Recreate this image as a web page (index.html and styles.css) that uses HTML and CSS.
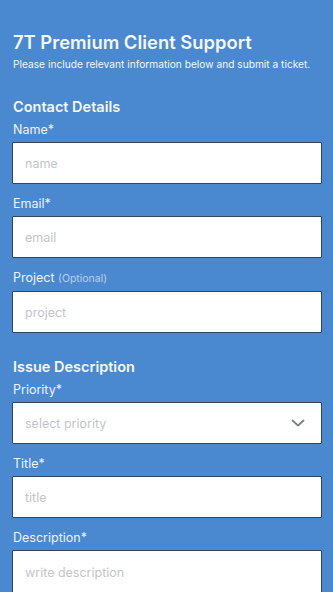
FILE: index.html
```html
<!DOCTYPE html>
<html lang="en">
<head>
    <meta charset="UTF-8">
    <meta name="viewport" content="width=device-width, initial-scale=1.0">
    <title>7T Premium Client Support</title>
    <link rel="stylesheet" href="styles.css">
</head>
<body>
    <div class="page">
        <h1 class="title">7T Premium Client Support</h1>
        <p class="subtitle">Please include relevant information below and submit a ticket.</p>

        <h2 class="section-title">Contact Details</h2>
        <div class="field">
            <label class="label" for="name">Name*</label>
            <input class="input" id="name" type="text" placeholder="name">
        </div>
        <div class="field">
            <label class="label" for="email">Email*</label>
            <input class="input" id="email" type="email" placeholder="email">
        </div>
        <div class="field">
            <label class="label" for="project">Project <span class="optional">(Optional)</span></label>
            <input class="input" id="project" type="text" placeholder="project">
        </div>

        <h2 class="section-title section-gap">Issue Description</h2>
        <div class="field">
            <label class="label" for="priority">Priority*</label>
            <div class="select">
                <span class="select-text">select priority</span>
                <svg class="chevron" width="14" height="8" viewBox="0 0 14 8">
                    <path d="M1.5 1.5 L7 6.5 L12.5 1.5" fill="none" stroke="#7a7f87" stroke-width="1.8" stroke-linecap="round" stroke-linejoin="round"/>
                </svg>
            </div>
        </div>
        <div class="field">
            <label class="label" for="title">Title*</label>
            <input class="input" id="title" type="text" placeholder="title">
        </div>
        <div class="field">
            <label class="label" for="description">Description*</label>
            <textarea class="input textarea" id="description" placeholder="write description"></textarea>
        </div>
    </div>
</body>
</html>
```

FILE: styles.css
```css
body {
    margin: 0;
    background-color: #4a88cf;
    font-family: Inter, "Noto Sans", sans-serif;
    color: #f4f7fc;
    overflow: hidden;
}

.page {
    height: 592px;
    padding: 30px 12px 0 12px;
    box-sizing: border-box;
    overflow: hidden;
}

.title {
    margin: 0;
    padding-left: 1px;
    font-size: 18.4px;
    line-height: 24px;
    font-weight: 600;
}

.subtitle {
    margin: 3px 0 0 0;
    padding-left: 1px;
    font-size: 10.2px;
    line-height: 14px;
}

.section-title {
    margin: 26px 0 5px 0;
    padding-left: 1px;
    font-size: 14.5px;
    line-height: 20px;
    font-weight: 600;
}

.section-gap {
    margin-top: 24px;
}

.field {
    margin-bottom: 12px;
}

.label {
    display: block;
    padding-left: 1px;
    margin-bottom: 4px;
    font-size: 12.5px;
    line-height: 16px;
    color: #eef3fa;
}

.optional {
    font-size: 10.5px;
    color: #b9d0ec;
}

.input,
.select {
    display: block;
    box-sizing: border-box;
    width: 310px;
    height: 42px;
    margin: 0;
    padding: 0 12px;
    background: #fff;
    border: 1.5px solid #34425a;
    border-radius: 1px;
    font-family: Inter, "Noto Sans", sans-serif;
    font-size: 12.5px;
    color: #333;
    outline: none;
}

.input::placeholder {
    color: #c3c5c9;
}

.select {
    display: flex;
    align-items: center;
    justify-content: space-between;
    padding-right: 16px;
}

.select-text {
    color: #c3c5c9;
}

.textarea {
    height: 60px;
    padding-top: 14px;
    resize: none;
}
```
